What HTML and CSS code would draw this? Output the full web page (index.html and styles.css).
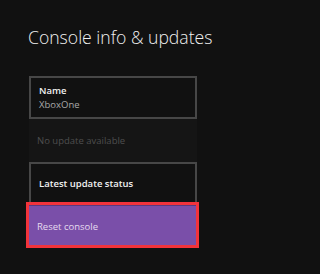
FILE: index.html
```html
<!DOCTYPE html>
<html>
<head>
<meta charset="utf-8">
<link rel="stylesheet" href="styles.css">
</head>
<body>
<div class="page">
  <h1 class="title">Console info &amp; updates</h1>
  <div class="list">
    <div class="item bordered">
      <div class="label">Name</div>
      <div class="value">XboxOne</div>
    </div>
    <div class="item disabled">
      <div class="muted">No update available</div>
    </div>
    <div class="item bordered">
      <div class="label">Latest update status</div>
    </div>
    <div class="item focused">
      <div class="action">Reset console</div>
    </div>
  </div>
</div>
</body>
</html>
```
FILE: styles.css
```css
html, body {
  margin: 0;
  padding: 0;
  background: #111111;
}
.page {
  width: 226px;
  height: 274px;
  background: #111111;
  font-family: "Open Sans", "Segoe UI", sans-serif;
  overflow: hidden;
}
.title {
  margin: 0;
  padding: 25px 0 0 28px;
  font-size: 17.6px;
  font-weight: 300;
  color: #f0f0f0;
  line-height: 24px;
  white-space: nowrap;
}
.list {
  margin: 27px 0 0 29px;
  width: 168px;
  display: flex;
  flex-direction: column;
}
.item {
  box-sizing: border-box;
  height: 43px;
  padding: 0 8px;
  display: flex;
  flex-direction: column;
  justify-content: center;
}
.bordered {
  border: 2px solid #474747;
}
.disabled {
  background: #151515;
}
.label {
  font-size: 9.5px;
  font-weight: 600;
  color: #f2f2f2;
  line-height: 14px;
}
.value {
  font-size: 9.5px;
  color: #a8a8a8;
  line-height: 14px;
}
.muted {
  font-size: 9.5px;
  color: #4e4e4e;
  line-height: 14px;
}
.focused {
  height: 40px;
  width: 167px;
  background: #7a4fa9;
  outline: 3px solid #f2333b;
  border-top: 1px solid #5a3a80;
  padding-top: 2px;
}
.action {
  font-size: 9.5px;
  color: #e6dcef;
  line-height: 14px;
}
```
